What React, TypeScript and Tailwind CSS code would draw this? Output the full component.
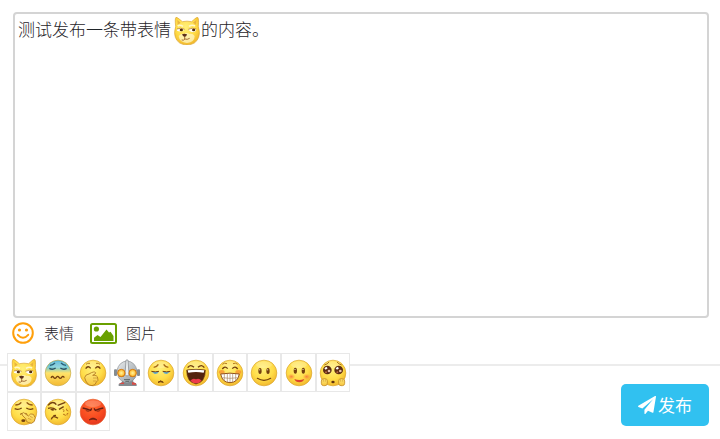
import type { ReactNode } from 'react';

interface EmojiItem {
  name: string;
  art: ReactNode;
}

const INK = '#74400f';

const Face = ({ fill = 'url(#face-yellow)', edge = '#d9a32a' }: { fill?: string; edge?: string }) => (
  <>
    <circle cx="39" cy="39" r="38.5" fill={fill} stroke={edge} strokeWidth="2" />
    <ellipse cx="39" cy="14" rx="24" ry="10" fill="#fff" opacity="0.22" />
  </>
);

const dogArt = (
  <>
    <path
      d="M6-2C10-3 21 8 25 11Q39 8 53 11C58 7 67-3 71-2Q75 1 73 25Q79 46 74 58Q66 80 39 81Q12 80 4 58Q-1 46 5 25Q2 2 6-2Z"
      fill="url(#face-yellow)"
      stroke="#dba632"
      strokeWidth="2"
    />
    <path d="M10 6L11 20 20 14ZM67 6L66 20 57 14Z" fill="#eab440" />
    <path d="M14 54Q22 46 30 48Q38 42 46 48Q56 46 62 54Q62 72 39 75Q16 72 14 54Z" fill="#fff6c8" opacity="0.75" />
    <path d="M11 24Q18 19 27 25M45 25Q54 19 63 24" fill="none" stroke="#fff8cc" strokeWidth="5" />
    <path d="M9 34Q18 27 32 35Q22 44 9 38ZM43 35Q54 27 67 34Q66 44 51 41Z" fill="#fff" />
    <path d="M9 33Q19 28 32 34M43 34Q54 28 67 33" fill="none" stroke="#a76b20" strokeWidth="2" />
    <ellipse cx="22" cy="36" rx="5" ry="4" fill="#54300f" />
    <ellipse cx="59" cy="36" rx="5" ry="4" fill="#54300f" />
    <path d="M24 49Q31 46 39 49Q38 57 32 57Q26 56 24 49Z" fill="#5d301b" />
    <path d="M32 56V63M23 66Q30 68 33 63Q39 66 47 61" fill="none" stroke="#925321" strokeWidth="2.5" />
  </>
);

const emojis: EmojiItem[] = [
  { name: 'doge', art: dogArt },
  {
    name: '汗',
    art: (
      <>
        <Face fill="url(#face-cold)" edge="#c7a945" />
        <path d="M15 16Q24 15 30 9M48 9Q54 15 63 16" fill="none" stroke="#295f77" strokeWidth="4" />
        <path d="M13 25Q22 31 32 24M46 24Q56 31 65 25" fill="none" stroke="#285367" strokeWidth="4" />
        <path d="M18 54Q22 46 26 52T34 52T42 52T50 52T58 53" fill="none" stroke={INK} strokeWidth="4" />
      </>
    ),
  },
  {
    name: '偷笑',
    art: (
      <>
        <Face />
        <path d="M18 13Q22 8 30 10M48 10Q56 8 60 13" fill="none" stroke="#b47a20" strokeWidth="3" />
        <path d="M17 26Q24 15 32 25M46 25Q54 15 61 26" fill="none" stroke={INK} strokeWidth="4" />
        <path
          d="M14 53Q16 43 27 42Q43 32 47 38Q48 42 38 46Q53 45 53 54Q57 62 49 66Q47 76 36 77Q20 76 14 53Z"
          fill="url(#face-hand)"
          stroke="#b17620"
          strokeWidth="2.5"
        />
        <path d="M39 54H52M39 63H49" stroke="#c58c2c" strokeWidth="2" />
      </>
    ),
  },
  {
    name: '奥特曼',
    art: (
      <>
        <path d="M24 55H57L58 66L68 72V78H14V72L24 66Z" fill="#858b90" />
        <path d="M16 71L28 66L31 72H16ZM54 66L66 70V74H54Z" fill="#d94b45" />
        <rect x="0" y="28" width="9" height="20" rx="3" fill="#858c91" />
        <rect x="69" y="28" width="9" height="20" rx="3" fill="#858c91" />
        <path d="M39 3Q63 5 69 31L65 51Q58 65 39 69Q20 65 13 51L9 31Q15 5 39 3Z" fill="url(#face-metal)" stroke="#858a8e" strokeWidth="2" />
        <path d="M36 0H42L45 43 39 49 33 43Z" fill="#e9edef" stroke="#7b8185" strokeWidth="2" />
        <path d="M11 31H30L34 42L28 50H16ZM67 31H48L44 42L50 50H62Z" fill="#734727" />
        <circle cx="22" cy="39" r="11" fill="url(#face-glow)" stroke="#d67c14" strokeWidth="3" />
        <circle cx="56" cy="39" r="11" fill="url(#face-glow)" stroke="#d67c14" strokeWidth="3" />
        <path d="M30 59H48M34 64H45" stroke="#5d6467" strokeWidth="3" />
      </>
    ),
  },
  {
    name: '失望',
    art: (
      <>
        <Face />
        <path d="M17 22Q27 21 31 13M47 13Q51 21 61 22" fill="none" stroke="#a96b1b" strokeWidth="4" />
        <path d="M12 36H32Q29 43 20 42ZM45 36H65L57 42Q49 43 45 36Z" fill="#66aed0" />
        <path d="M10 34Q22 37 33 34M44 34Q56 37 67 34" fill="none" stroke={INK} strokeWidth="3" />
        <path d="M30 67Q38 58 46 67Q38 64 30 67Z" fill={INK} stroke={INK} strokeWidth="3" />
      </>
    ),
  },
  {
    name: '大笑',
    art: (
      <>
        <Face />
        <path d="M14 23Q22 11 33 22M45 22Q56 11 64 23" fill="none" stroke={INK} strokeWidth="4" />
        <path d="M11 30Q39 26 67 30Q68 66 39 72Q10 66 11 30Z" fill="#54230d" stroke={INK} strokeWidth="2" />
        <path d="M14 31Q39 27 64 31L62 38Q39 34 16 38Z" fill="#fff" />
        <path d="M22 62Q30 53 39 58Q48 53 56 62Q48 70 39 70Q30 70 22 62Z" fill="#ec3b4a" />
      </>
    ),
  },
  {
    name: '嘻嘻',
    art: (
      <>
        <Face />
        <path d="M16 13Q22 7 30 11M48 11Q56 7 62 13" fill="none" stroke="#b47a20" strokeWidth="3" />
        <path d="M16 27Q24 16 32 26M46 26Q54 16 62 27" fill="none" stroke={INK} strokeWidth="4" />
        <ellipse cx="14" cy="36" rx="9" ry="6" fill="#f7892d" opacity="0.7" />
        <ellipse cx="64" cy="36" rx="9" ry="6" fill="#f7892d" opacity="0.7" />
        <path d="M11 42Q39 37 67 42Q63 67 39 68Q15 67 11 42Z" fill="#fff" stroke="#914d17" strokeWidth="3" />
        <path d="M13 53Q39 57 65 53M22 42V62M31 41V66M39 41V67M47 41V66M56 42V62" fill="none" stroke="#a98562" strokeWidth="2" />
      </>
    ),
  },
  {
    name: '微笑',
    art: (
      <>
        <Face />
        <ellipse cx="27" cy="33" rx="5" ry="9" fill={INK} />
        <ellipse cx="51" cy="33" rx="5" ry="9" fill={INK} />
        <path d="M26 28V31M50 28V31" stroke="#fff4c8" strokeWidth="3" />
        <path d="M19 55Q39 67 59 55" fill="none" stroke={INK} strokeWidth="3.5" strokeLinecap="round" />
      </>
    ),
  },
  {
    name: '害羞',
    art: (
      <>
        <Face />
        <ellipse cx="16" cy="50" rx="12" ry="9" fill="url(#face-blush)" />
        <ellipse cx="62" cy="50" rx="12" ry="9" fill="url(#face-blush)" />
        <ellipse cx="28" cy="32" rx="5" ry="9" fill={INK} />
        <ellipse cx="52" cy="32" rx="5" ry="9" fill={INK} />
        <path d="M27 27V30M51 27V30" stroke="#fff4c8" strokeWidth="3" />
        <path d="M25 57Q40 63 55 57Q51 67 40 67Q29 67 25 57Z" fill="#dc442d" />
      </>
    ),
  },
  {
    name: '可怜',
    art: (
      <>
        <Face />
        <path d="M13 15Q22 13 27 6M51 6Q57 13 65 15" fill="none" stroke="#aa711e" strokeWidth="3" />
        <circle cx="22" cy="30" r="13" fill="#5c2c13" />
        <circle cx="56" cy="30" r="13" fill="#5c2c13" />
        <path d="M19 20L23 25L17 29L13 25ZM53 20L57 25L51 29L47 25Z" fill="#fff" />
        <circle cx="27" cy="33" r="4" fill="#e9c3b1" />
        <circle cx="61" cy="33" r="4" fill="#e9c3b1" />
        <circle cx="18" cy="37" r="3" fill="#b76645" />
        <circle cx="52" cy="37" r="3" fill="#b76645" />
        <ellipse cx="39" cy="66" rx="5" ry="4" fill="#61310e" />
        <rect x="4" y="56" width="18" height="21" rx="7" fill="url(#face-hand)" stroke="#c78f29" strokeWidth="2.5" />
        <rect x="56" y="56" width="18" height="21" rx="7" fill="url(#face-hand)" stroke="#c78f29" strokeWidth="2.5" />
        <path d="M10 57V65M16 57V65M62 57V65M68 57V65" stroke="#d19d31" strokeWidth="2" />
      </>
    ),
  },
  {
    name: '嘘',
    art: (
      <>
        <Face />
        <path d="M13 18Q25 18 31 10M47 10Q53 18 65 18" fill="none" stroke="#955b17" strokeWidth="4" />
        <path d="M11 29Q22 34 32 27M46 27Q56 34 67 29" fill="none" stroke={INK} strokeWidth="4" />
        <path d="M27 46L34 43M43 43L49 46" stroke="#955b17" strokeWidth="3" />
        <ellipse cx="37" cy="65" rx="6" ry="4" fill={INK} />
        <path d="M34 43Q38 38 42 44L52 51Q59 41 67 46Q77 56 70 67Q62 77 53 71Q44 69 44 59L36 51Q32 48 34 43Z" fill="url(#face-hand)" stroke="#b17620" strokeWidth="2.5" />
        <path d="M51 58L61 62M57 52L65 56" stroke="#c58c2c" strokeWidth="2" />
      </>
    ),
  },
  {
    name: '怒骂',
    art: (
      <>
        <Face />
        <path d="M9 19Q24 3 34 17M38 19L61 10" fill="none" stroke={INK} strokeWidth="4" />
        <path d="M9 28Q23 24 34 33M42 31L56 23" fill="none" stroke={INK} strokeWidth="4" />
        <path d="M15 31Q21 38 28 34L25 29Z" fill={INK} />
        <path d="M53 30Q59 33 56 39M65 29Q62 35 70 36M54 46Q61 44 61 51M70 43Q64 42 66 49" fill="none" stroke="#bd791e" strokeWidth="3" />
        <path d="M19 61Q23 46 39 58M25 50L33 49" fill="none" stroke={INK} strokeWidth="4" />
      </>
    ),
  },
  {
    name: '愤怒',
    art: (
      <>
        <Face fill="url(#face-red)" edge="#e8602f" />
        <path d="M8 27Q20 29 32 34L35 28M70 27Q57 29 46 34L42 28" fill="none" stroke="#681f12" strokeWidth="4" />
        <path d="M16 34Q21 40 30 36ZM62 34Q57 40 48 36Z" fill="#681f12" />
        <path d="M27 63Q39 51 51 63Q39 58 27 63Z" fill="#681f12" stroke="#681f12" strokeWidth="2" />
      </>
    ),
  },
];

const EmojiIcon = ({ art }: { art: ReactNode }) => (
  <svg viewBox="-3 -3 84 84" className="size-7" aria-hidden="true">
    {art}
  </svg>
);

const EmojiPaints = () => (
  <svg className="absolute size-0" aria-hidden="true">
    <defs>
      <radialGradient id="face-yellow" cx="0.45" cy="0.35" r="0.68">
        <stop offset="0" stopColor="#fff07a" />
        <stop offset="0.6" stopColor="#ffdc47" />
        <stop offset="1" stopColor="#f0b42b" />
      </radialGradient>
      <linearGradient id="face-cold" x1="0" y1="0" x2="0" y2="1">
        <stop offset="0" stopColor="#3aa9d2" />
        <stop offset="0.28" stopColor="#78cbd5" />
        <stop offset="0.5" stopColor="#ffe36a" />
        <stop offset="1" stopColor="#f3b932" />
      </linearGradient>
      <linearGradient id="face-hand" x1="0" y1="0" x2="0" y2="1">
        <stop offset="0" stopColor="#ffeb7d" />
        <stop offset="1" stopColor="#f6c43e" />
      </linearGradient>
      <linearGradient id="face-metal" x1="0" y1="0" x2="1" y2="1">
        <stop offset="0" stopColor="#e8ebed" />
        <stop offset="1" stopColor="#929a9f" />
      </linearGradient>
      <radialGradient id="face-glow">
        <stop offset="0" stopColor="#fff6a0" />
        <stop offset="1" stopColor="#ffb21d" />
      </radialGradient>
      <radialGradient id="face-blush">
        <stop offset="0" stopColor="#f66a3c" stopOpacity="0.85" />
        <stop offset="1" stopColor="#f9973c" stopOpacity="0" />
      </radialGradient>
      <radialGradient id="face-red" cx="0.45" cy="0.3" r="0.7">
        <stop offset="0" stopColor="#ff6a32" />
        <stop offset="0.65" stopColor="#f84a1f" />
        <stop offset="1" stopColor="#e2361f" />
      </radialGradient>
    </defs>
  </svg>
);

const SmileIcon = () => (
  <svg viewBox="0 0 22 22" className="size-[22px]" fill="none" stroke="#ff9f0a" strokeWidth="2" aria-hidden="true">
    <circle cx="11" cy="11" r="9.8" />
    <circle cx="7.5" cy="8" r="1.6" fill="#ff9f0a" stroke="none" />
    <circle cx="14.5" cy="8" r="1.6" fill="#ff9f0a" stroke="none" />
    <path d="M5.8 12.8Q11 18.6 16.2 12.8" strokeLinecap="round" />
  </svg>
);

const PictureIcon = () => (
  <svg viewBox="0 0 27 21" className="h-[21px] w-[27px]" aria-hidden="true">
    <rect x="1" y="1" width="25" height="19" rx="1.5" fill="none" stroke="#69a000" strokeWidth="2" />
    <circle cx="6.4" cy="6" r="2.6" fill="#69a000" />
    <path d="M4 18V14.8L7.5 12L10.5 14L16.5 6.5L19 9.5L20.5 8.8L23.5 13V18Z" fill="#69a000" />
  </svg>
);

const PlaneIcon = () => (
  <svg viewBox="0 0 1792 1792" className="size-[18px]" fill="currentColor" aria-hidden="true">
    <path d="M1764 11q33 24 27 64l-256 1536q-5 29-32 45-14 8-31 8-11 0-24-5l-453-185-242 295q-18 23-49 23-13 0-22-4-19-7-30.5-23.500t-11.500-36.500v-349l864-1059-1069 925-395-162q-37-14-40-55-2-40 32-59l1664-960q15-9 32-9 20 0 36 11z" />
  </svg>
);

const App = () => {
  return (
    <main className="bg-white pt-3 pb-3.5 font-['Noto_Sans_CJK_SC',sans-serif] text-[#1f2429]">
      <EmojiPaints />
      <div
        role="textbox"
        aria-label="内容"
        aria-multiline="true"
        contentEditable
        suppressContentEditableWarning
        className="mr-[11px] ml-[13px] min-h-[306px] rounded border-2 border-[#d4d4d4] px-[3px] text-[17px] leading-[30px] font-light outline-none"
      >
        测试发布一条带表情
        <span className="ml-0.5 inline-block align-middle" contentEditable={false}>
          <EmojiIcon art={dogArt} />
        </span>
        的内容。
      </div>

      <div className="relative flex h-12 items-start gap-4 border-b-2 border-[#ececec] pt-1 pl-3 text-[15px] leading-[22px] font-light">
        <button type="button" className="flex items-center gap-2.5" aria-expanded="true">
          <SmileIcon />
          表情
        </button>
        <button type="button" className="flex items-center gap-[9px]">
          <PictureIcon />
          图片
        </button>

        <div className="absolute top-[35px] left-[7px] grid w-[343px] grid-cols-10">
          {emojis.map((emoji) => (
            <button
              key={emoji.name}
              type="button"
              aria-label={emoji.name}
              className="flex h-[39px] items-center justify-center border border-[#e8e8e8] bg-white"
            >
              <EmojiIcon art={emoji.art} />
            </button>
          ))}
        </div>
      </div>

      <div className="flex justify-end pt-[18px] pr-[11px]">
        <button
          type="button"
          className="flex h-[42px] w-[88px] items-center justify-center gap-0.5 rounded-[5px] bg-[#31c1f0] text-[17px] text-white"
        >
          <PlaneIcon />
          发布
        </button>
      </div>
    </main>
  );
};

export default App;
